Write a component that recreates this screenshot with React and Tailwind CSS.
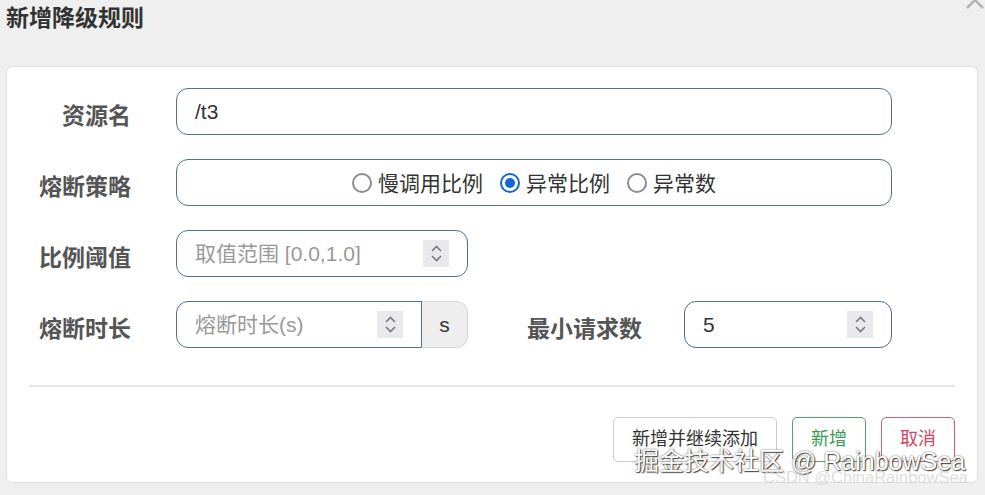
const FONT = "font-['Liberation_Sans','Noto_Sans_CJK_SC',sans-serif]"

function Spinner() {
  return (
    <div className="flex h-[27px] w-[26px] flex-col items-center justify-center gap-[3px] bg-[#e9e9ed]">
      <svg width="11" height="7" viewBox="0 0 11 7" fill="none">
        <path d="M1 6L5.5 1.5L10 6" stroke="#7a7a7a" strokeWidth="1.6" />
      </svg>
      <svg width="11" height="7" viewBox="0 0 11 7" fill="none">
        <path d="M1 1L5.5 5.5L10 1" stroke="#7a7a7a" strokeWidth="1.6" />
      </svg>
    </div>
  )
}

function Radio({ label, checked }) {
  return (
    <label className="flex items-center gap-[6px]">
      {checked ? (
        <span className="flex h-[20px] w-[20px] items-center justify-center rounded-full border-[2.5px] border-[#1565d8]">
          <span className="h-[10px] w-[10px] rounded-full bg-[#1565d8]" />
        </span>
      ) : (
        <span className="h-[20px] w-[20px] rounded-full border-[2.5px] border-[#8c8c8c]" />
      )}
      <span className="pt-[3px] text-[21px] text-[#333]">{label}</span>
    </label>
  )
}

function Label({ children, className = '' }) {
  return (
    <div className={`mt-[9px] shrink-0 text-right text-[23px] font-bold text-[#555] ${className}`}>
      {children}
    </div>
  )
}

const box = 'h-[47px] border border-[#4f7190] bg-white'

export default function App() {
  return (
    <div className={`relative h-[495px] w-[985px] overflow-hidden bg-[#efefef] ${FONT}`}>
      <div className="h-[66px] pl-[6px] pt-[5px]">
        <h2 className="text-[23px] font-bold leading-[26px] text-[#333]">新增降级规则</h2>
      </div>

      {/* close icon, mostly above the top edge */}
      <svg className="absolute left-[965px] top-[-10px]" width="20" height="20" viewBox="0 0 20 20">
        <path d="M2 2L18 18M18 2L2 18" stroke="#b5b5b5" strokeWidth="2.6" />
      </svg>

      <div className="ml-[6px] h-[417px] w-[972px] rounded-[6px] border border-[#dedede] bg-white pt-[21px]">
        <div className="flex flex-col gap-[24px]">
          <div className="flex items-center">
            <Label className="w-[124px]">资源名</Label>
            <div className={`ml-[45px] flex w-[716px] items-center rounded-[12px] pl-[18px] text-[21px] text-[#333] ${box}`}>
              /t3
            </div>
          </div>

          <div className="flex items-center">
            <Label className="w-[124px]">熔断策略</Label>
            <div className={`ml-[45px] flex w-[716px] items-center justify-center gap-[17px] rounded-[12px] ${box}`}>
              <Radio label="慢调用比例" />
              <Radio label="异常比例" checked />
              <Radio label="异常数" />
            </div>
          </div>

          <div className="flex items-center">
            <Label className="w-[124px]">比例阈值</Label>
            <div className={`ml-[45px] flex w-[292px] items-center justify-between rounded-[12px] pl-[18px] pr-[18px] ${box}`}>
              <span className="text-[21px] text-[#999]">取值范围 [0.0,1.0]</span>
              <Spinner />
            </div>
          </div>

          <div className="flex items-center">
            <Label className="w-[124px]">熔断时长</Label>
            <div className="ml-[45px] flex w-[292px]">
              <div className={`flex w-[246px] items-center justify-between rounded-l-[12px] pl-[18px] pr-[18px] ${box}`}>
                <span className="text-[21px] text-[#999]">熔断时长(s)</span>
                <Spinner />
              </div>
              <div className="flex h-[47px] flex-1 items-center justify-center rounded-r-[12px] border border-l-0 border-[#d6d6d6] bg-[#eeeeee] text-[21px] text-[#333]">
                s
              </div>
            </div>
            <Label className="w-[174px]">最小请求数</Label>
            <div className={`ml-[42px] flex w-[208px] items-center justify-between rounded-[12px] pl-[18px] pr-[18px] ${box}`}>
              <span className="text-[21px] text-[#333]">5</span>
              <Spinner />
            </div>
          </div>
        </div>

        <div className="mx-[22px] mt-[37px] border-t-2 border-[#e6e6e6]" />

        <div className="mr-[22px] mt-[30px] flex justify-end gap-[15px]">
          <button className="h-[45px] w-[164px] rounded-[5px] border border-[#cccccc] bg-white text-[18px] text-[#333]">
            新增并继续添加
          </button>
          <button className="h-[45px] w-[74px] rounded-[5px] border border-[#4ea666] bg-white text-[18px] text-[#3a9c52]">
            新增
          </button>
          <button className="h-[45px] w-[74px] rounded-[5px] border border-[#d0607a] bg-white text-[18px] text-[#cf4764]">
            取消
          </button>
        </div>
      </div>

      <div className="absolute left-[634px] top-[446px] whitespace-nowrap text-[25px] leading-[30px] text-white [text-shadow:1px_1px_1px_#444,0_0_2px_#555]">
        掘金技术社区 @ RainbowSea
      </div>
      <div className="absolute left-[763px] top-[467px] whitespace-nowrap text-[16.5px] leading-[20px] text-[#d4d4d4]/80">
        CSDN @ChinaRainbowSea
      </div>
    </div>
  )
}
